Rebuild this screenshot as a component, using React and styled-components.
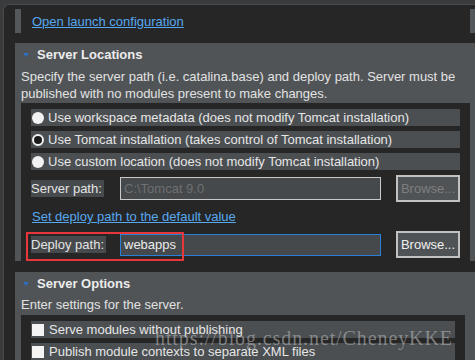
import React from "react";
import styled, { createGlobalStyle } from "styled-components";

const Global = createGlobalStyle`
  html, body {
    margin: 0;
    padding: 0;
    background: #262626;
  }
  body {
    font-family: "Liberation Sans", Arial, sans-serif;
    font-size: 13px;
    color: #e2e2e2;
  }
`;

const Window = styled.div`
  position: relative;
  width: 475px;
  height: 360px;
  overflow: hidden;
  background: #3a3b3c;
  padding: 4px 0 0 3px;
  box-sizing: border-box;
`;

const Panel = styled.div`
  height: 100%;
  background: #262626;
  border-top: 1px solid #4a4b4c;
  border-left: 1px solid #4a4b4c;
  border-top-left-radius: 6px;
  box-sizing: border-box;
`;

const TopRow = styled.div`
  display: flex;
  align-items: center;
  height: 38px;
  padding: 0 0 6px 11px;
  box-sizing: border-box;
`;

const Bar = styled.div`
  width: 6px;
  height: 24px;
  background: #55585a;
`;

const Thumb = styled.div`
  width: 5px;
  height: 24px;
  margin-left: auto;
  background: #55585a;
`;

const Link = styled.a`
  color: #56a8f0;
  text-decoration: underline;
  cursor: pointer;
  margin-left: ${(p) => p.$indent || 0}px;
`;

const Section = styled.div`
  margin: 0 0 11px 11px;
  background: #505457;
  padding: 0 ${(p) => p.$right}px 0 6px;
`;

const Header = styled.div`
  display: flex;
  align-items: center;
  height: 22px;
  font-weight: bold;
  color: #ececec;
`;

const Arrow = styled.span`
  width: 0;
  height: 0;
  border-left: 3.5px solid transparent;
  border-right: 3.5px solid transparent;
  border-top: 4px solid #2f6fbf;
  margin: 2px 8px 0 2px;
`;

const Description = styled.div`
  line-height: 17px;
  padding: ${(p) => p.$pad};
  color: #e2e2e2;
`;

const Body = styled.div`
  background: #262626;
  padding: 6px 10px ${(p) => p.$bottom}px 10px;
  display: flex;
  flex-direction: column;
`;

const OptionRow = styled.div`
  display: flex;
  align-items: center;
  height: 17px;
  margin-bottom: 5px;
  background: #4b4f52;
  padding-left: 1px;
  color: #e6e6e6;
  white-space: nowrap;
`;

const Radio = styled.span`
  width: 12px;
  height: 12px;
  border-radius: 50%;
  box-sizing: border-box;
  background: ${(p) => (p.$checked ? "#1c1c1c" : "#f2f2f2")};
  border: ${(p) => (p.$checked ? "2.5px solid #f2f2f2" : "none")};
  margin-right: 4px;
  flex: none;
`;

const Check = styled.span`
  width: 12px;
  height: 12px;
  background: #f4f4f4;
  margin-right: 5px;
  flex: none;
`;

const FieldRow = styled.div`
  display: grid;
  grid-template-columns: 74px 261px 64px;
  column-gap: 15px;
  align-items: center;
  height: 27px;
`;

const Label = styled.span`
  justify-self: start;
  background: #474a4c;
  height: 17px;
  line-height: 17px;
  padding-right: 2px;
  color: #e4e4e4;
  white-space: nowrap;
`;

const Field = styled.div`
  height: ${(p) => p.$h}px;
  box-sizing: border-box;
  border: 1px solid ${(p) => (p.$focus ? "#2a7fd8" : "#c9c9c9")};
  background: #45494b;
  display: flex;
  align-items: center;
  padding-left: 3px;
  color: ${(p) => (p.$disabled ? "#6e7072" : "#ececec")};
`;

const Button = styled.div`
  height: 27px;
  box-sizing: border-box;
  border: 2px solid #c2c2c2;
  background: #4f5356;
  display: flex;
  align-items: center;
  justify-content: center;
  color: ${(p) => (p.$disabled ? "#7d7f80" : "#f0f0f0")};
`;

const LinkRow = styled.div`
  height: 29px;
  display: flex;
  align-items: center;
  padding-left: 1px;
`;

const DeployWrap = styled.div`
  position: relative;
`;

const Highlight = styled.div`
  position: absolute;
  left: -5px;
  top: 1px;
  width: 158px;
  height: 29px;
  box-sizing: border-box;
  border: 2px solid #e8373a;
  pointer-events: none;
`;

const Watermark = styled.div`
  position: absolute;
  left: 155px;
  top: 327px;
  font-family: "Liberation Serif", "Times New Roman", serif;
  font-size: 20px;
  letter-spacing: 0.9px;
  color: rgba(190, 190, 190, 0.55);
  white-space: nowrap;
  pointer-events: none;
`;

export default function App() {
  return (
    <>
      <Global />
      <Window>
        <Panel>
          <TopRow>
            <Bar />
            <Link $indent={11}>Open launch configuration</Link>
            <Thumb />
          </TopRow>

          <Section $right={5}>
            <Header>
              <Arrow />
              Server Locations
            </Header>
            <Description $pad="3px 0 1px 0">
              Specify the server path (i.e. catalina.base) and deploy path. Server must be
              <br />
              published with no modules present to make changes.
            </Description>
            <Body $bottom={3}>
              <OptionRow>
                <Radio />
                Use workspace metadata (does not modify Tomcat installation)
              </OptionRow>
              <OptionRow>
                <Radio $checked />
                Use Tomcat installation (takes control of Tomcat installation)
              </OptionRow>
              <OptionRow>
                <Radio />
                Use custom location (does not modify Tomcat installation)
              </OptionRow>
              <FieldRow>
                <Label>Server path:</Label>
                <Field $h={23} $disabled>C:\Tomcat 9.0</Field>
                <Button $disabled>Browse...</Button>
              </FieldRow>
              <LinkRow>
                <Link>Set deploy path to the default value</Link>
              </LinkRow>
              <DeployWrap>
                <FieldRow>
                  <Label>Deploy path:</Label>
                  <Field $h={22} $focus>webapps</Field>
                  <Button>Browse...</Button>
                </FieldRow>
                <Highlight />
              </DeployWrap>
            </Body>
          </Section>

          <Section $right={10}>
            <Header>
              <Arrow />
              Server Options
            </Header>
            <Description $pad="2px 0 2px 0">Enter settings for the server.</Description>
            <Body $bottom={6}>
              <OptionRow>
                <Check />
                Serve modules without publishing
              </OptionRow>
              <OptionRow>
                <Check />
                Publish module contexts to separate XML files
              </OptionRow>
            </Body>
          </Section>
        </Panel>
        <Watermark>https://blog.csdn.net/CheneyKKE</Watermark>
      </Window>
    </>
  );
}
